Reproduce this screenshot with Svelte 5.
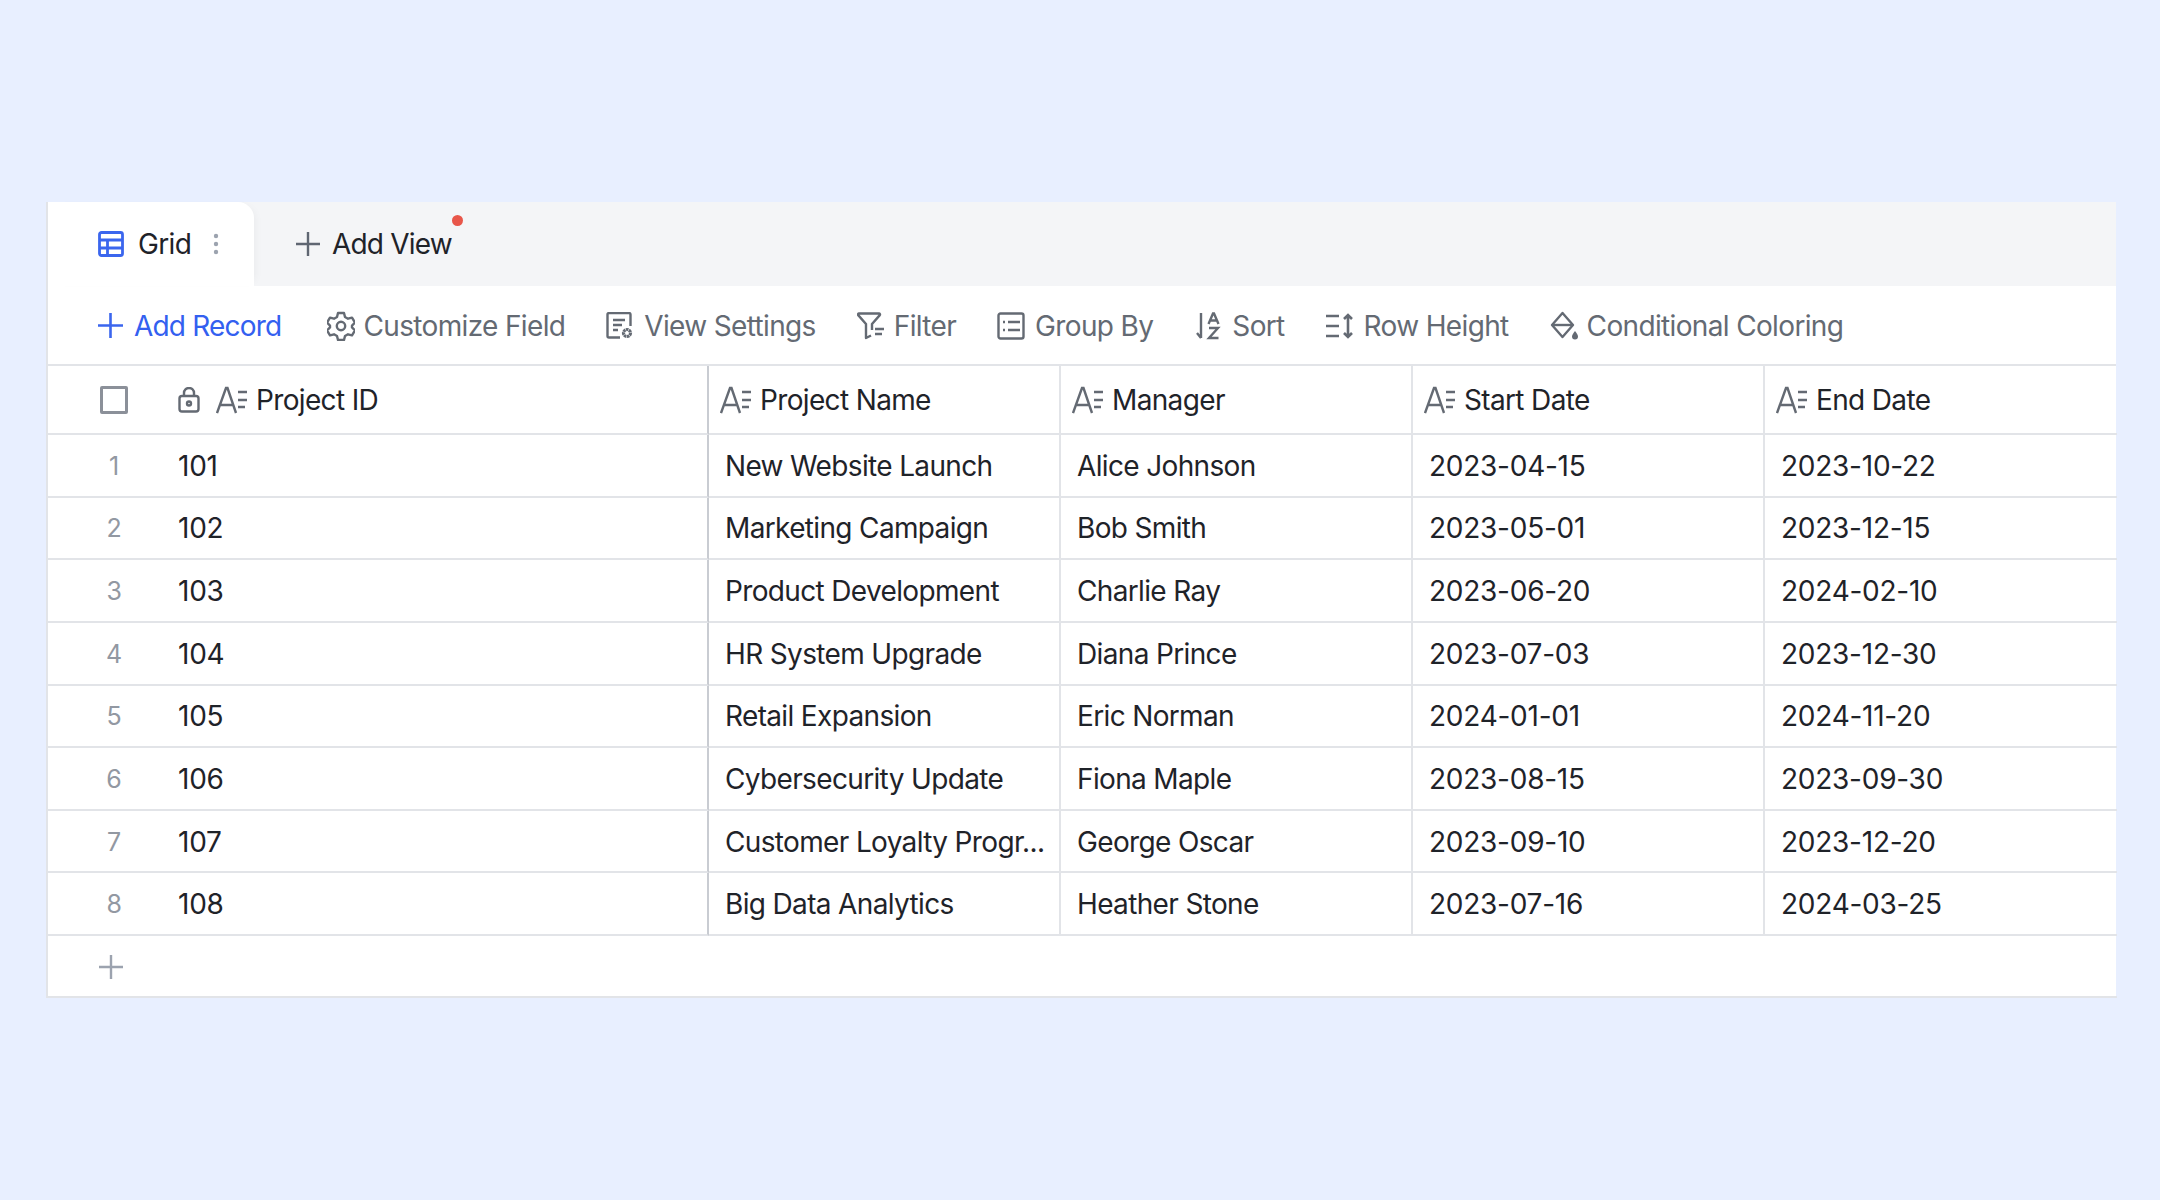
<script>
  const fields = ['Project ID', 'Project Name', 'Manager', 'Start Date', 'End Date'];
  const records = [
    ['101', 'New Website Launch', 'Alice Johnson', '2023-04-15', '2023-10-22'],
    ['102', 'Marketing Campaign', 'Bob Smith', '2023-05-01', '2023-12-15'],
    ['103', 'Product Development', 'Charlie Ray', '2023-06-20', '2024-02-10'],
    ['104', 'HR System Upgrade', 'Diana Prince', '2023-07-03', '2023-12-30'],
    ['105', 'Retail Expansion', 'Eric Norman', '2024-01-01', '2024-11-20'],
    ['106', 'Cybersecurity Update', 'Fiona Maple', '2023-08-15', '2023-09-30'],
    ['107', 'Customer Loyalty Progr...', 'George Oscar', '2023-09-10', '2023-12-20'],
    ['108', 'Big Data Analytics', 'Heather Stone', '2023-07-16', '2024-03-25']
  ];
</script>

{#snippet textIcon()}
  <svg class="field-icon" width="32" height="28" viewBox="0 0 32 28" fill="none" stroke="#646a73" stroke-width="2.4">
    <path d="M1 27 10 2h1.500L20 27M4.500 19h12.500" />
    <path d="M22 6h9M22 14h9M22 21h7" />
  </svg>
{/snippet}

<div class="page">
  <div class="card">
    <div class="tabs">
      <div class="tab active">
        <svg width="26" height="26" viewBox="0 0 26 26" fill="none" stroke="#3b66ee" stroke-width="2.800">
          <rect x="1.500" y="1.500" width="23" height="23" rx="2" />
          <path d="M1.500 9h23M1.500 17h23M9.500 9v15.500" />
        </svg>
        <span>Grid</span>
        <svg class="dots" width="6" height="22" viewBox="0 0 6 22" fill="#9ca3af">
          <circle cx="3" cy="3" r="2.200" /><circle cx="3" cy="11" r="2.200" /><circle cx="3" cy="19" r="2.200" />
        </svg>
      </div>
      <div class="tab add">
        <svg width="26" height="26" viewBox="0 0 26 26" stroke="#5f6672" stroke-width="2.400">
          <path d="M13 1v24M1 13h24" />
        </svg>
        <span>Add View</span>
        <i class="dot"></i>
      </div>
    </div>

    <div class="toolbar">
      <button class="tool primary">
        <svg width="27" height="27" viewBox="0 0 27 27" stroke="#3b66ee" stroke-width="2.600"><path d="M13.500 1v25M1 13.500h25" /></svg>
        Add Record
      </button>
      <button class="tool customize">
        <svg width="28" height="30" viewBox="0 0 28 30" fill="none" stroke="#646a73" stroke-width="2.400" stroke-linejoin="round">
          <path d="M11 2h6l1 4 3 1.700 4-1.100 3 5-3 3v1.800l3 3-3 5-4-1.100-3 1.700-1 4h-6l-1-4-3-1.700-4 1.100-3-5 3-3v-1.800l-3-3 3-5 4 1.100 3-1.700z" />
          <circle cx="14" cy="15" r="4.200" />
        </svg>
        Customize Field
      </button>
      <button class="tool">
        <svg width="28" height="28" viewBox="0 0 28 28" fill="none" stroke="#646a73" stroke-width="2.400">
          <path d="M14 25.500H3a1.500 1.500 0 0 1-1.500-1.500V2.500A1.500 1.500 0 0 1 3 1h20a1.500 1.500 0 0 1 1.500 1.500V14" />
          <path d="M7 8h12M7 13h9M7 18h5" />
          <circle cx="21" cy="21" r="3.500" stroke-width="3.200" stroke-dasharray="2.500 0.500" />
        </svg>
        View Settings
      </button>
      <button class="tool filter">
        <svg width="28" height="28" viewBox="0 0 28 28" fill="none" stroke="#646a73" stroke-width="2.400" stroke-linejoin="round">
          <path d="M2 1.500h20a1 1 0 0 1 .8 1.600L15 12v6M2 1.500a1 1 0 0 0-.8 1.600L9 12v14l5-2.500" />
          <path d="M18 17h9M18 22h7" />
        </svg>
        Filter
      </button>
      <button class="tool">
        <svg width="28" height="28" viewBox="0 0 28 28" fill="none" stroke="#646a73" stroke-width="2.400">
          <rect x="1.500" y="1.500" width="25" height="25" rx="2" />
          <path d="M11 10h12M11 18h12M6 10h2M6 18h2" />
        </svg>
        Group By
      </button>
      <button class="tool sort">
        <svg width="26" height="28" viewBox="0 0 26 28" fill="none" stroke="#646a73" stroke-width="2.400">
          <path d="M5 1v25M1 21l4 5" />
          <path d="M12.500 12 17 1.500h1L22.500 12M14 8.500h7" />
          <path d="M13 16h9L13 26h9.500" />
        </svg>
        Sort
      </button>
      <button class="tool row-height">
        <svg width="30" height="26" viewBox="0 0 30 26" fill="none" stroke="#646a73" stroke-width="2.600">
          <path d="M1 3h13M1 13h13M1 23h13" />
          <path d="M23 2v22M19 6l4-4 4 4M19 20l4 4 4-4" />
        </svg>
        Row Height
      </button>
      <button class="tool coloring">
        <svg width="30" height="30" viewBox="0 0 30 30" fill="none" stroke="#646a73" stroke-width="2.400" stroke-linejoin="round">
          <path d="M12.500 2 23 14 12.500 26 2 14z" />
          <path d="M3 14h19" />
          <path d="M25 20c-2 2.800-3 4-3 5.500a3 3 0 0 0 6 0c0-1.500-1-2.700-3-5.500z" fill="#646a73" stroke="none" />
        </svg>
        Conditional Coloring
      </button>
    </div>

    <div class="grid">
      <div class="head first">
        <span class="check-cell"><i class="checkbox"></i></span>
        <svg class="lock" width="22" height="26" viewBox="0 0 22 26" fill="none" stroke="#646a73" stroke-width="2.400">
          <rect x="1.500" y="9" width="19" height="15.500" rx="2.500" />
          <path d="M6 9V6a5 5 0 0 1 10 0v3" />
          <circle cx="11" cy="16.500" r="2" />
        </svg>
        {@render textIcon()}
        <span>{fields[0]}</span>
      </div>
      {#each fields.slice(1) as field}
        <div class="head">
          {@render textIcon()}
          <span>{field}</span>
        </div>
      {/each}

      {#each records as record, i}
        <div class="cell first digits">
          <span class="num">{i + 1}</span>
          <span>{record[0]}</span>
        </div>
        <div class="cell">{record[1]}</div>
        <div class="cell">{record[2]}</div>
        <div class="cell digits">{record[3]}</div>
        <div class="cell digits">{record[4]}</div>
      {/each}

      <div class="add-row">
        <svg width="26" height="26" viewBox="0 0 26 26" stroke="#9ca3af" stroke-width="2.400"><path d="M13 1v24M1 13h24" /></svg>
      </div>
    </div>
  </div>
</div>

<style>
  :global(body) {
    margin: 0;
    background: #e8efff;
  }
  .page {
    height: 1200px;
    padding: 202px 44px 0 46px;
    box-sizing: border-box;
    font-family: Inter, "Liberation Sans", sans-serif;
    font-size: 28px;
    letter-spacing: -0.65px;
    color: #1f2329;
  }
  .card {
    background: #fff;
    border-left: 2px solid #e2e4e8;
  }
  .tabs {
    display: flex;
    height: 84px;
    background: #f4f5f7;
  }
  .tab {
    display: flex;
    align-items: center;
    gap: 14px;
    position: relative;
  }
  .tab.active {
    box-sizing: border-box;
    width: 206px;
    padding-left: 50px;
    background: #fff;
    border-radius: 0 16px 0 0;
    box-shadow: 6px 0 10px -6px rgba(0, 0, 0, 0.06);
  }
  .dots {
    margin-left: 8px;
  }
  .tab.add {
    margin-left: 41px;
    gap: 11px;
    letter-spacing: -0.8px;
  }
  .dot {
    position: absolute;
    right: -11px;
    top: 13px;
    width: 11px;
    height: 11px;
    border-radius: 50%;
    background: #e8564a;
  }
  .toolbar {
    display: flex;
    align-items: center;
    gap: 41px;
    height: 77px;
    padding: 1px 0 0 49px;
  }
  .tool {
    display: flex;
    align-items: center;
    gap: 10px;
    padding: 0;
    border: none;
    background: none;
    font: inherit;
    letter-spacing: inherit;
    color: #646a73;
    white-space: nowrap;
  }
  .tool.primary {
    color: #3360f0;
    letter-spacing: -0.8px;
    margin-right: 3px;
  }
  .tool.customize {
    margin-left: 2px;
    gap: 8px;
  }
  .tool.filter {
    gap: 9px;
  }
  .tool.sort {
    margin-left: 2px;
  }
  .tool.row-height {
    margin-left: -1px;
    gap: 9px;
  }
  .tool.coloring {
    gap: 7px;
  }
  .grid {
    display: grid;
    grid-template-columns: 661px repeat(4, 352px);
    grid-template-rows: 69px repeat(8, 62.625px) 62px;
    border-top: 2px solid #e2e4e8;
  }
  .head, .cell {
    display: flex;
    align-items: center;
    box-sizing: border-box;
    border-bottom: 2px solid #e2e4e8;
    border-right: 2px solid #e2e4e8;
    white-space: nowrap;
    overflow: hidden;
  }
  .head {
    padding-left: 11px;
    gap: 8px;
  }
  .cell {
    padding: 1px 0 0 16px;
  }
  .cell.digits {
    letter-spacing: -0.25px;
  }
  .head:nth-child(5n), .cell:nth-child(5n) {
    border-right: none;
  }
  .head.first, .cell.first {
    padding-left: 0;
    border-right: 2px solid #c9ccd2;
  }
  .check-cell {
    display: flex;
    flex: none;
    box-sizing: border-box;
    width: 122px;
    padding-left: 52px;
  }
  .lock {
    margin-right: 8px;
  }
  .num {
    flex: none;
    width: 132px;
    margin-right: -2px;
    text-align: center;
    color: #9298a2;
    font-size: 25px;
  }
  .checkbox {
    display: block;
    width: 28px;
    height: 28px;
    box-sizing: border-box;
    border: 3px solid #8b9099;
    border-radius: 2px;
  }
  .add-row {
    grid-column: 1 / -1;
    display: flex;
    align-items: center;
    padding: 2px 0 0 50px;
    border-bottom: 2px solid #e2e4e8;
  }
</style>
